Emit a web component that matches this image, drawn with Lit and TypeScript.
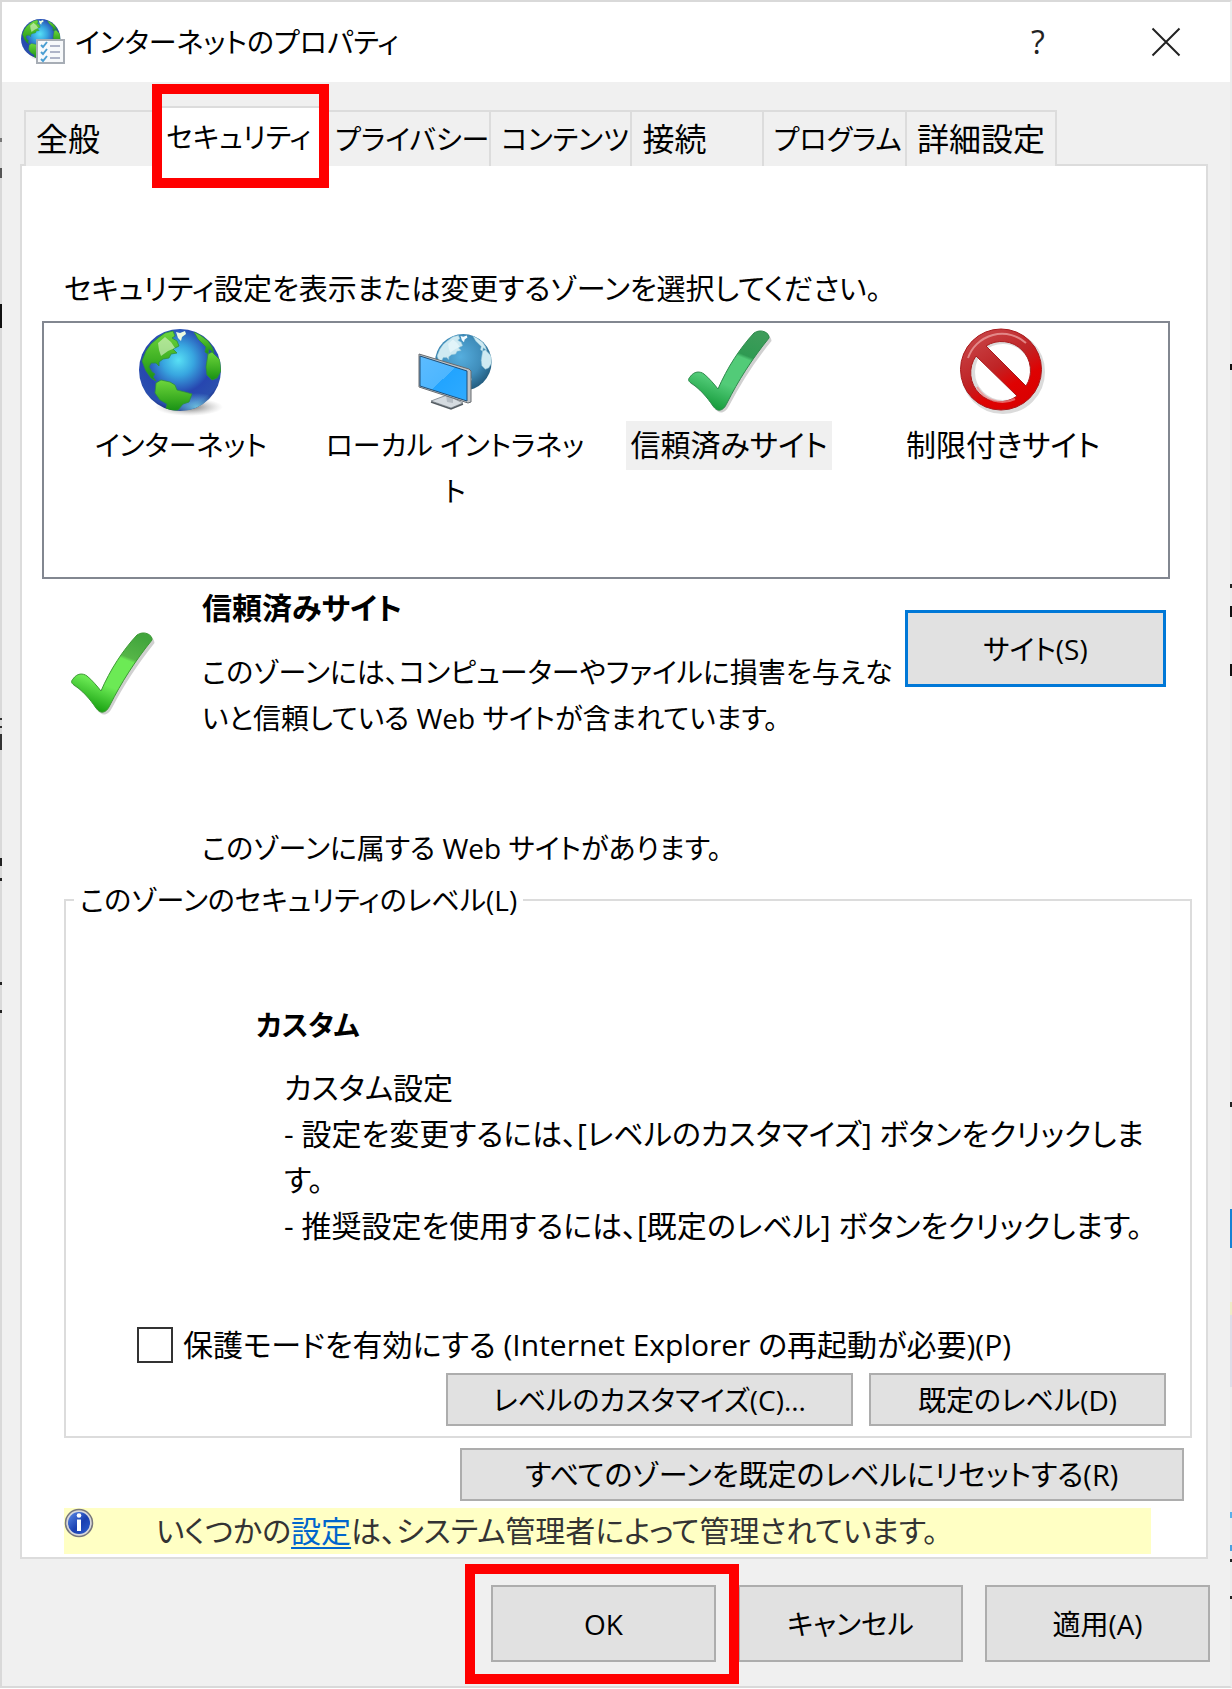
import { LitElement, html, css, svg } from "lit";
import { customElement, state } from "lit/decorators.js";
import { classMap } from "lit/directives/class-map.js";

const continents = (land: string, ice: string, edge: string) => svg`
  <g fill=${land} stroke=${edge} stroke-width="0.8" stroke-linejoin="round">
    <path d="M3 32 7 22 12 15 19 9 26 4 34 2 36 7 33 9 38 12 40 17 34 20 38 24 32 25 30 29 24 30 20 33 20 37 17 34 12 34 10 38 13 43 16 45 14 48 17 52 12 49 7 42 5 37Z"/>
    <path d="M17 54 22 51 31 53 36 56 38 61 46 63 53 65 50 73 44 75 39 81 32 82 27 80 28 75 21 71 16 64Z"/>
    <path d="M55 3 61 6 69 12 73 18 75 24 70 20 69 25 66 23 67 18 63 14 59 10Z"/>
    <path d="M69 25 73 23 77 27 81 31 82 42 78 49 73 51 68 46 67 38Z"/>
  </g>
  <path d="M37 3 41 4 46 2 47 5 43 8 42 12 39 9Z" fill=${ice}/>
  <path d="M19 14 26 8 32 13 36 19 29 22 22 27 20 21Z" fill=${ice} opacity=".55"/>`;

const globe = (id: string) => svg`
  <defs>
    <radialGradient id="${id}-sea" cx=".48" cy=".38" r=".62">
      <stop offset="0" stop-color="#58e0f5"/><stop offset=".3" stop-color="#38a6e0"/>
      <stop offset=".65" stop-color="#2746b0"/><stop offset=".9" stop-color="#2a4fae"/><stop offset="1" stop-color="#1d2f80"/>
    </radialGradient>
    <linearGradient id="${id}-land" x1="0" y1="0" x2="0" y2="1">
      <stop offset="0" stop-color="#6ed63c"/><stop offset=".6" stop-color="#3cae22"/><stop offset="1" stop-color="#179015"/>
    </linearGradient>
    <radialGradient id="${id}-shade"><stop offset="0" stop-color="#333" stop-opacity=".75"/><stop offset="1" stop-color="#999" stop-opacity="0"/></radialGradient>
    <radialGradient id="${id}-glow"><stop offset="0" stop-color="#79d8ee" stop-opacity=".85"/><stop offset="1" stop-color="#79d8ee" stop-opacity="0"/></radialGradient>
    <clipPath id="${id}-clip"><circle cx="41" cy="41" r="41"/></clipPath>
  </defs>
  <ellipse cx="50" cy="78" rx="34" ry="9" fill="url(#${id}-shade)"/>
  <circle cx="41" cy="41" r="41" fill="url(#${id}-sea)"/>
  <g clip-path="url(#${id}-clip)">
    <ellipse cx="58" cy="78" rx="26" ry="14" fill="url(#${id}-glow)"/>
    ${continents(`url(#${id}-land)`, "#eefbe0", "#2d8f3c")}
  </g>`;

const check = (id: string, stops: string[]) => html`
  <svg class="icon" viewBox="0 0 84 84" aria-hidden="true">
    <defs>
      <linearGradient id=${id} x1=".75" y1="0" x2=".35" y2="1">
        <stop offset="0" stop-color=${stops[0]}/><stop offset=".28" stop-color=${stops[1]}/>
        <stop offset=".32" stop-color=${stops[2]}/><stop offset=".68" stop-color=${stops[2]}/>
        <stop offset="1" stop-color=${stops[3]}/>
      </linearGradient>
    </defs>
    <path d="M3 48C7 42 13 42 17 45C22 49 27 55 31 60C40 39 53 19 67 4C74-1 83 4 83 10C66 31 52 53 41 74C36 84 30 83 26 77C20 68 12 59 4 54C1 52 1 50 3 48Z" transform="translate(1.5 2)" fill="#777" opacity=".35"/>
    <path d="M3 48C7 42 13 42 17 45C22 49 27 55 31 60C40 39 53 19 67 4C74-1 83 4 82 9C65 30 51 52 40 74C36 83 30 83 26 77C20 68 12 59 4 54C1 52 1 50 3 48Z" fill="url(#${id})" stroke=${stops[4]} stroke-width="1"/>
  </svg>`;

const internetIcon = () => html`<svg class="icon" viewBox="0 0 84 84" aria-hidden="true">${globe("net")}</svg>`;

const intranetIcon = () => html`
  <svg class="icon" viewBox="0 0 84 84" aria-hidden="true">
    <defs>
      <radialGradient id="lan-sea" cx=".45" cy=".4" r=".62">
        <stop offset="0" stop-color="#56aede"/><stop offset=".6" stop-color="#3f8dbb"/><stop offset="1" stop-color="#225a7c"/>
      </radialGradient>
      <linearGradient id="lan-screen" x1="0" y1="0" x2="1" y2="1">
        <stop offset="0" stop-color="#5cbcff"/><stop offset=".5" stop-color="#4db6ff"/>
        <stop offset=".5" stop-color="#22a4ff"/><stop offset="1" stop-color="#2fabff"/>
      </linearGradient>
      <clipPath id="lan-clip"><circle cx="41" cy="41" r="41"/></clipPath>
    </defs>
    <g transform="translate(22 5) scale(.69)">
      <circle cx="41" cy="41" r="41" fill="url(#lan-sea)"/>
      <g clip-path="url(#lan-clip)">${continents("#cfeaf2", "#f2fbff", "#8fc4d8")}</g>
    </g>
    <path d="M18 72 34 66 50 74 38 79Z" fill="#d5dbe0" stroke="#8d959c"/>
    <path d="M18 73 38 80 50 75" fill="none" stroke="#555d63" stroke-width="1.5"/>
    <path d="M33 66 40 68 40 74 34 73Z" fill="#b5bdc4"/>
    <path d="M6 25 56 40 58 42 58 73 55 74 6 58Z" fill="#bfc3c6" stroke="#686c70"/>
    <path d="M7 27 54 42 54 72 7 57Z" fill="url(#lan-screen)" stroke="#1f4f78" stroke-width="1"/>
  </svg>`;

const restrictedIcon = () => html`
  <svg class="icon" viewBox="1 0 84 84" aria-hidden="true">
    <defs>
      <linearGradient id="stop-red" x1=".2" y1="0" x2=".8" y2="1">
        <stop offset="0" stop-color="#c9474a"/><stop offset=".45" stop-color="#bf2426"/><stop offset=".7" stop-color="#df0202"/><stop offset="1" stop-color="#d80000"/>
      </linearGradient>
    </defs>
    <circle cx="43" cy="43" r="35" fill="none" stroke="#888" stroke-width="14" opacity=".3"/>
    <path fill-rule="evenodd" fill="url(#stop-red)" stroke="#a91a1c" d="M41 0A40.500 40.500 0 1 0 41 81A40.500 40.500 0 1 0 41 0ZM26 17A29 29 0 0 1 66 57ZM16 27L57 67A29 29 0 0 1 16 27Z"/>
    <path d="M8 29A36 36 0 0 1 66 14" fill="none" stroke="#f0a9a9" stroke-width="2" opacity=".7"/>
    <path d="M17 58A29 29 0 0 0 55 70" fill="none" stroke="#f08a8a" stroke-width="2" opacity=".7"/>
  </svg>`;

const zones = [
  { id: "internet", label: ["インターネット"], icon: internetIcon },
  { id: "intranet", label: ["ローカル イントラネッ", "ト"], icon: intranetIcon },
  { id: "trusted", label: ["信頼済みサイト"], dense: true, icon: () => check("tick-list", ["#3d9c5a", "#2f9a52", "#52cb78", "#149a3a", "#2f8a4d"]) },
  { id: "restricted", label: ["制限付きサイト"], dense: true, icon: restrictedIcon },
];

const tabs = [
  { name: "全般", kanji: true },
  { name: "セキュリティ" },
  { name: "プライバシー" },
  { name: "コンテンツ" },
  { name: "接続", kanji: true },
  { name: "プログラム" },
  { name: "詳細設定", kanji: true },
];

@customElement("app-root")
export class AppRoot extends LitElement {
  @state() private zone = "trusted";

  static styles = css`
    :host {
      display: block;
      color: #000;
      font: 28px/46px "Open Sans", "Noto Sans CJK JP", sans-serif;
      font-feature-settings: "palt";
    }
    * { box-sizing: border-box; }
    button { font: inherit; font-feature-settings: inherit; color: inherit; margin: 0; padding: 0; white-space: nowrap; }
    p, h1, h2 { margin: 0; font-size: inherit; }
    h1 { font-weight: 400; }
    .dialog {
      position: relative;
      display: flex;
      flex-direction: column;
      background: #f0f0f0;
      border: 2px solid #d9d9d9;
      border-right-color: #ececec;
    }
    .edge { position: absolute; top: 0; bottom: 0; width: 2px; }
    .edge-left {
      left: -2px;
      background: linear-gradient(#0000 136px, #777 136px 140px, #0000 140px 166px, #555 166px 176px, #0000 176px 302px, #111 302px 326px, #0000 326px 716px, #333 716px 718px, #0000 718px 724px, #333 724px 726px, #0000 726px 732px, #333 732px 748px, #0000 748px 856px, #222 856px 864px, #0000 864px 876px, #222 876px 879px, #0000 879px 980px, #222 980px 983px, #0000 983px 1008px, #222 1008px 1011px, #0000 1011px);
    }
    .edge-right {
      right: -2px;
      background: linear-gradient(#0000 362px, #111 362px 368px, #0000 368px 582px, #222 582px 586px, #0000 586px 604px, #111 604px 615px, #0000 615px 662px, #111 662px 674px, #0000 674px 1100px, #222 1100px 1105px, #0000 1105px 1207px, #1682d4 1207px 1246px, #0000 1246px 1300px, #eeecc8 1300px 1313px, #dddde8 1313px 1385px, #0000 1385px 1510px, #5ab0ea 1510px 1516px, #0000 1516px 1543px, #4aa0e0 1543px 1549px, #0000 1549px 1557px, #222 1557px 1560px, #0000 1560px 1594px, #222 1594px 1597px, #0000 1597px);
    }
    .titlebar { display: flex; align-items: center; height: 80px; padding-left: 19px; background: #fff; }
    .titlebar h1 { flex: 1; margin-left: 8px; }
    .app-icon { width: 46px; height: 46px; flex: none; }
    .caption { width: 128px; height: 80px; border: 0; background: none; color: #222; font-size: 32px; }
    .caption svg { display: block; width: 30px; height: 30px; margin: 0 auto; }
    .tabs {
      display: grid;
      grid-template-columns: 131fr 172fr 161fr 142fr 132fr 144fr 151fr;
      align-items: end;
      margin: 24px 173px 0 22px;
    }
    .tab {
      position: relative;
      height: 56px;
      border: 2px solid #dcdcdc;
      border-width: 2px 2px 0 0;
      background: #f0f0f0;
      text-align: left;
      padding-left: 10px;
    }
    .tab:first-child { border-left-width: 2px; }
    .tab.selected {
      height: 60px;
      padding-left: 12px;
      background: #fff;
      border-width: 2px 0 0;
      z-index: 1;
    }
    .tab.kanji { font-size: 32px; }
    .mark { position: absolute; border: 10px solid #f00; pointer-events: none; z-index: 2; }
    .mark-tab { inset: -24px -4px -22px -2px; }
    .mark-ok { inset: -23px -25px -24px -28px; }
    .panel {
      margin: -2px 22px 0 18px;
      padding: 100px 14px 3px 20px;
      background: #fff;
      border: 2px solid #dcdcdc;
    }
    .panel .prompt { padding-left: 22px; font-size: 29px; white-space: nowrap; }
    .zones {
      display: grid;
      grid-template-columns: repeat(4, 1fr);
      align-items: start;
      min-height: 258px;
      margin: 9px 22px 0 0;
      padding: 6px 28px 0 0;
      border: 2px solid #828790;
    }
    .zone { display: flex; flex-direction: column; align-items: center; gap: 8px; border: 0; background: none; line-height: 46px; }
    .zone span { padding: 1px 4px 2px; }
    .zone.dense, .copy h2, .setting p, .protect, .notice { font-size: 30px; }
    .zone.selected span { background: #f0f0f0; }
    .icon { display: block; width: 84px; height: 84px; flex: none; overflow: visible; }
    .detail { display: grid; grid-template-columns: 132px 1fr 261px; margin: 6px 26px 0 28px; }
    .detail .icon { margin-top: 46px; }
    .detail .copy { white-space: nowrap; }
    .copy p { margin-top: 18px; }
    .copy p + p { margin-top: 84px; }
    .push { border: 2px solid #adadad; background: #e1e1e1; text-align: center; }
    .sites { height: 77px; margin-top: 25px; border: 3px solid #0078d7; }
    .level { margin: 9px 0 0 22px; padding: 0; border: 2px solid #dcdcdc; min-width: 0; }
    .level legend { margin-left: 8px; padding: 0 6px; line-height: 40px; }
    .setting { padding: 82px 0 0 190px; }
    .setting p { margin: 17px 0 0 28px; white-space: nowrap; }
    .protect { display: flex; align-items: center; gap: 10px; margin: 73px 0 5px 71px; white-space: nowrap; }
    .protect input { appearance: none; width: 36px; height: 36px; margin: 0; border: 2px solid #333; background: #fff; }
    .protect input:checked { background: #0078d7; }
    .actions { display: grid; grid-template-columns: 407fr 297fr; gap: 16px; margin: 0 24px 10px 380px; }
    .actions .push, .reset { height: 53px; }
    .reset { display: block; width: 63%; margin: 10px 8px 7px auto; font-size: 29px; }
    .notice { display: flex; margin: 0 41px 0 22px; background: #ffffc4; color: #333; }
    .notice svg { width: 30px; height: 30px; flex: none; margin-right: 62px; }
    .notice a { color: #0066cc; text-underline-offset: 5px; text-decoration-thickness: 2px; }
    .footer { display: flex; justify-content: flex-end; gap: 22px; padding: 26px 20px 24px; }
    .footer .push { position: relative; width: 225px; height: 77px; }
    .footer .marked { z-index: 1; }
  `;

  render() {
    return html`
      <main class="dialog">
        <div class="edge edge-left"></div>
        <div class="edge edge-right"></div>
        <header class="titlebar">
          <svg class="app-icon" viewBox="0 0 46 46" aria-hidden="true">
            <g transform="scale(.48)">${globe("app")}</g>
            <path d="M16 21H43V44H16Z" fill="#f7f9fb" stroke="#a7adb5" stroke-width="2"/>
            <path d="m20 26 2 2 4-5M20 33l2 2 4-5M20 40l2 2 4-5" fill="none" stroke="#4a9ed2" stroke-width="2"/>
            <path d="M29 27H39M29 33H39M29 39H39" stroke="#aeb4c8" stroke-width="2"/>
          </svg>
          <h1>インターネットのプロパティ</h1>
          <button class="caption" aria-label="ヘルプ">?</button>
          <button class="caption" aria-label="閉じる">
            <svg viewBox="0 0 30 30"><path d="M1.500 1.500 28.500 28.500M28.500 1.500 1.500 28.500" stroke="#222" stroke-width="2"/></svg>
          </button>
        </header>
        <nav class="tabs" role="tablist">
          ${tabs.map((tab, i) => html`
            <button class=${classMap({ tab: true, kanji: !!tab.kanji, selected: i === 1 })} role="tab" aria-selected=${i === 1}>
              ${tab.name}${i === 1 ? html`<i class="mark mark-tab"></i>` : ""}
            </button>`)}
        </nav>
        <section class="panel" role="tabpanel">
          <p class="prompt">セキュリティ設定を表示または変更するゾーンを選択してください。</p>
          <div class="zones">
            ${zones.map((z) => html`
              <button class=${classMap({ zone: true, dense: !!z.dense, selected: this.zone === z.id })}
                aria-pressed=${this.zone === z.id} @click=${() => (this.zone = z.id)}>
                ${z.icon()}
                <span>${z.label.map((line, i) => (i ? html`<br>${line}` : line))}</span>
              </button>`)}
          </div>
          <div class="detail">
            ${check("tick-detail", ["#41a53c", "#56b548", "#6cea55", "#17a010", "#3d9a35"])}
            <div class="copy">
              <h2>信頼済みサイト</h2>
              <p>このゾーンには、コンピューターやファイルに損害を与えな<br>いと信頼している Web サイトが含まれています。</p>
              <p>このゾーンに属する Web サイトがあります。</p>
            </div>
            <button class="push sites">サイト(S)</button>
          </div>
          <fieldset class="level">
            <legend>このゾーンのセキュリティのレベル(L)</legend>
            <div class="setting">
              <h2>カスタム</h2>
              <p>カスタム設定<br>- 設定を変更するには、[レベルのカスタマイズ] ボタンをクリックしま<br>す。<br>- 推奨設定を使用するには、[既定のレベル] ボタンをクリックします。</p>
            </div>
            <div class="protect">
              <input type="checkbox" id="protect">
              <label for="protect">保護モードを有効にする (Internet Explorer の再起動が必要)(P)</label>
            </div>
            <div class="actions">
              <button class="push">レベルのカスタマイズ(C)...</button>
              <button class="push">既定のレベル(D)</button>
            </div>
          </fieldset>
          <button class="push reset">すべてのゾーンを既定のレベルにリセットする(R)</button>
          <div class="notice">
            <svg viewBox="0 0 30 30" aria-hidden="true">
              <defs><linearGradient id="info" x1="0" y1="0" x2="1" y2="1"><stop offset="0" stop-color="#5b8be8"/><stop offset=".55" stop-color="#1a3fb0"/><stop offset="1" stop-color="#2d5fd0"/></linearGradient></defs>
              <circle cx="15" cy="15" r="13.500" fill="#d8d8dc" stroke="#77777c" stroke-width="1.500"/>
              <circle cx="15" cy="15" r="11" fill="url(#info)"/>
              <circle cx="15" cy="7.500" r="2.300" fill="#fff"/><path d="M13 11.500H17V23H13Z" fill="#fff"/>
            </svg>
            <p>いくつかの<a href="#settings">設定</a>は、システム管理者によって管理されています。</p>
          </div>
        </section>
        <footer class="footer">
          <button class="push marked">OK<i class="mark mark-ok"></i></button>
          <button class="push">キャンセル</button>
          <button class="push">適用(A)</button>
        </footer>
      </main>
    `;
  }
}
